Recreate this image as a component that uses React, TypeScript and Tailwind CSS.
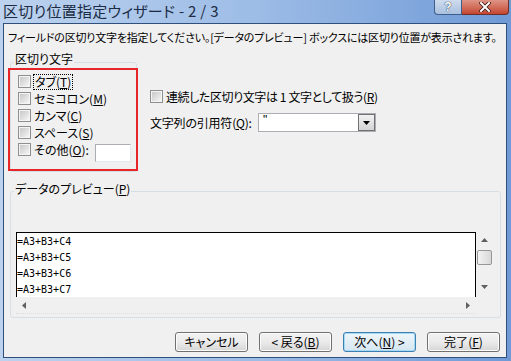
import React from "react";

const JP = "font-['Noto_Sans_CJK_JP',sans-serif] [font-feature-settings:'palt']";

function Check() {
  return (
    <span className="flex h-[13px] w-[13px] shrink-0 border border-[#8e8f8f] bg-[#f4f4f4] p-[1px]">
      <span className="h-full w-full bg-gradient-to-br from-[#c9c9c9] via-[#dedede] to-[#f6f6f6]" />
    </span>
  );
}

function Key({ k }: { k: string }) {
  return (
    <>
      (<span className="underline underline-offset-[1px]">{k}</span>)
    </>
  );
}

function Btn({ children, primary }: { children: React.ReactNode; primary?: boolean }) {
  return (
    <div
      className={`flex h-[20px] w-[73px] items-center justify-center rounded-[3px] border text-[12px] leading-none ${
        primary
          ? "border-[#3c7fb1] bg-gradient-to-b from-[#eef6fb] to-[#d5e6f1] shadow-[inset_0_0_0_1px_#a6d9f5]"
          : "border-[#707070] bg-gradient-to-b from-[#f2f2f2] via-[#ebebeb] to-[#d6d6d6] shadow-[inset_0_0_0_1px_#fcfcfc]"
      }`}
    >
      {children}
    </div>
  );
}

const ROWS = ["=A3+B3+C4", "=A3+B3+C5", "=A3+B3+C6", "=A3+B3+C7"];

export default function App() {
  return (
    <div
      className={`flex h-[361px] w-[511px] flex-col bg-gradient-to-r from-[#bcd2ee] via-[#9dbce6] to-[#6f9ad6] pb-[3px] pl-[3px] pr-[4px] text-black ${JP}`}
    >
      {/* title bar */}
      <div className="flex h-[23px] items-start justify-between">
        <div className="mt-[2px] whitespace-nowrap text-[15px] leading-[18px] tracking-[0.3px] text-[#1b2c44]">
          区切り位置指定ウィザード - 2 / 3
        </div>
        <div className="-mr-[2px] flex h-[15px]">
          <div className="flex w-[28px] items-center justify-center rounded-bl-[4px] border border-t-0 border-[#3d5d8a] bg-gradient-to-b from-[#cfdcee] to-[#a9c0df] font-['Liberation_Sans',sans-serif] text-[12px] font-bold leading-[12px] text-white [text-shadow:0_0_1px_#1f3556,0_0_1px_#1f3556]">
            ?
          </div>
          <div className="flex w-[47px] items-center justify-center rounded-br-[4px] border border-l-0 border-t-0 border-[#6d2f2a] bg-gradient-to-b from-[#dd9486] to-[#c4452f]">
            <svg width="12" height="10" viewBox="0 0 12 10">
              <path d="M2 1 L10 9 M10 1 L2 9" stroke="#3b1a16" strokeWidth="3.6" strokeLinecap="square" />
              <path d="M2 1 L10 9 M10 1 L2 9" stroke="#ffffff" strokeWidth="2" strokeLinecap="square" />
            </svg>
          </div>
        </div>
      </div>

      {/* client area */}
      <div className="flex flex-1 flex-col border border-[#2f4f7d] bg-[#f0f0f0]">
        <p className="ml-[4px] mt-[6px] whitespace-nowrap text-[11px] leading-[14px] tracking-[-0.2px]">
          フィールドの区切り文字を指定してください。[データのプレビュー] ボックスには区切り位置が表示されます。
        </p>

        <div className="mt-[18px] flex items-start">
          {/* delimiter group */}
          <div className="relative ml-[6px] h-[110px] w-[127px] rounded-[3px] border border-[#d5dfe5]">
            <span className="absolute -top-[11px] left-[3px] bg-[#f0f0f0] px-[1px] text-[12px] leading-[14px]">区切り文字</span>
            <div className="-ml-[3px] mt-[5px] flex h-[103px] w-[130px] flex-col border-2 border-[#e8262a] pl-[8px] pt-[3px] text-[12px] leading-[14px]">
              <div className="flex h-[17px] items-center gap-[2px]">
                <Check />
                <span className="border border-dotted border-black px-[1px]">
                  タブ<Key k="T" />
                </span>
              </div>
              <div className="flex h-[17px] items-center gap-[3px]">
                <Check />
                <span>
                  セミコロン<Key k="M" />
                </span>
              </div>
              <div className="flex h-[17px] items-center gap-[3px]">
                <Check />
                <span>
                  カンマ<Key k="C" />
                </span>
              </div>
              <div className="flex h-[17px] items-center gap-[3px]">
                <Check />
                <span>
                  スペース<Key k="S" />
                </span>
              </div>
              <div className="flex h-[17px] items-center gap-[3px]">
                <Check />
                <span>
                  その他<Key k="O" />:
                </span>
                <div className="ml-auto mr-[5px] mt-[7px] h-[18px] w-[36px] border border-[#abadb3] border-b-[#e3e9ef] border-r-[#e3e9ef] bg-white" />
              </div>
            </div>
          </div>

          {/* right options */}
          <div className="ml-[13px] mt-[26px] flex flex-col text-[12px] leading-[14px]">
            <div className="flex h-[17px] items-center gap-[3px]">
              <Check />
              <span className="tracking-[-0.4px]">
                連続した区切り文字は 1 文字として扱う<Key k="R" />
              </span>
            </div>
            <div className="mt-[8px] flex items-center">
              <span className="w-[108px] tracking-[-0.2px]">
                文字列の引用符<Key k="Q" />:
              </span>
              <div className="flex h-[19px] w-[118px] border border-[#abadb3] bg-white">
                <span className="flex-1 pl-[4px] font-['Liberation_Sans',sans-serif] text-[12px] leading-[12px]">"</span>
                <div className="flex w-[17px] items-center justify-center border border-[#707070] bg-gradient-to-b from-[#f2f2f2] to-[#d4d4d4]">
                  <svg width="7" height="4" viewBox="0 0 7 4">
                    <path d="M0 0 H7 L3.5 4 Z" fill="#000" />
                  </svg>
                </div>
              </div>
            </div>
          </div>
        </div>

        {/* preview group */}
        <div className="relative ml-[6px] mt-[19px] h-[127px] w-[491px] rounded-[3px] border border-[#d5dfe5]">
          <span className="absolute -top-[10px] left-[3px] bg-[#f0f0f0] px-[1px] text-[12px] leading-[14px]">
            データのプレビュー<Key k="P" />
          </span>
          <div className="ml-[5px] mt-[40px] flex w-[477px] flex-col">
            <div className="flex h-[65px]">
              <div className="w-[460px] border-l border-r border-t border-black bg-white pt-[1px] font-['DejaVu_Sans_Mono',monospace] text-[10px]">
                {ROWS.map((r) => (
                  <div key={r} className="h-[16px] leading-[16px]">
                    {r}
                  </div>
                ))}
              </div>
              <div className="flex w-[17px] flex-col items-center bg-[#f0f0f0]">
                <svg className="mt-[6px]" width="7" height="4" viewBox="0 0 7 4">
                  <path d="M3.5 0 L7 4 H0 Z" fill="#606060" />
                </svg>
                <div className="mt-[8px] h-[15px] w-[15px] rounded-[2px] border border-[#979797] bg-gradient-to-r from-[#f3f3f3] to-[#d8d8d8]" />
                <svg className="mb-[8px] mt-auto" width="7" height="4" viewBox="0 0 7 4">
                  <path d="M0 0 H7 L3.5 4 Z" fill="#606060" />
                </svg>
              </div>
            </div>
            <div className="flex h-[17px] w-[460px] items-center justify-between border-b border-dotted border-[#dcdcdc] px-[6px]">
              <svg width="4" height="7" viewBox="0 0 4 7">
                <path d="M0 3.5 L4 0 V7 Z" fill="#606060" />
              </svg>
              <svg width="4" height="7" viewBox="0 0 4 7">
                <path d="M4 3.5 L0 0 V7 Z" fill="#606060" />
              </svg>
            </div>
          </div>
        </div>

        {/* buttons */}
        <div className="mr-[6px] mt-[14px] flex justify-end gap-[11px]">
          <Btn>キャンセル</Btn>
          <Btn>
            &lt; 戻る<Key k="B" />
          </Btn>
          <Btn primary>
            次へ<Key k="N" /> &gt;
          </Btn>
          <Btn>
            完了<Key k="F" />
          </Btn>
        </div>
      </div>
    </div>
  );
}
